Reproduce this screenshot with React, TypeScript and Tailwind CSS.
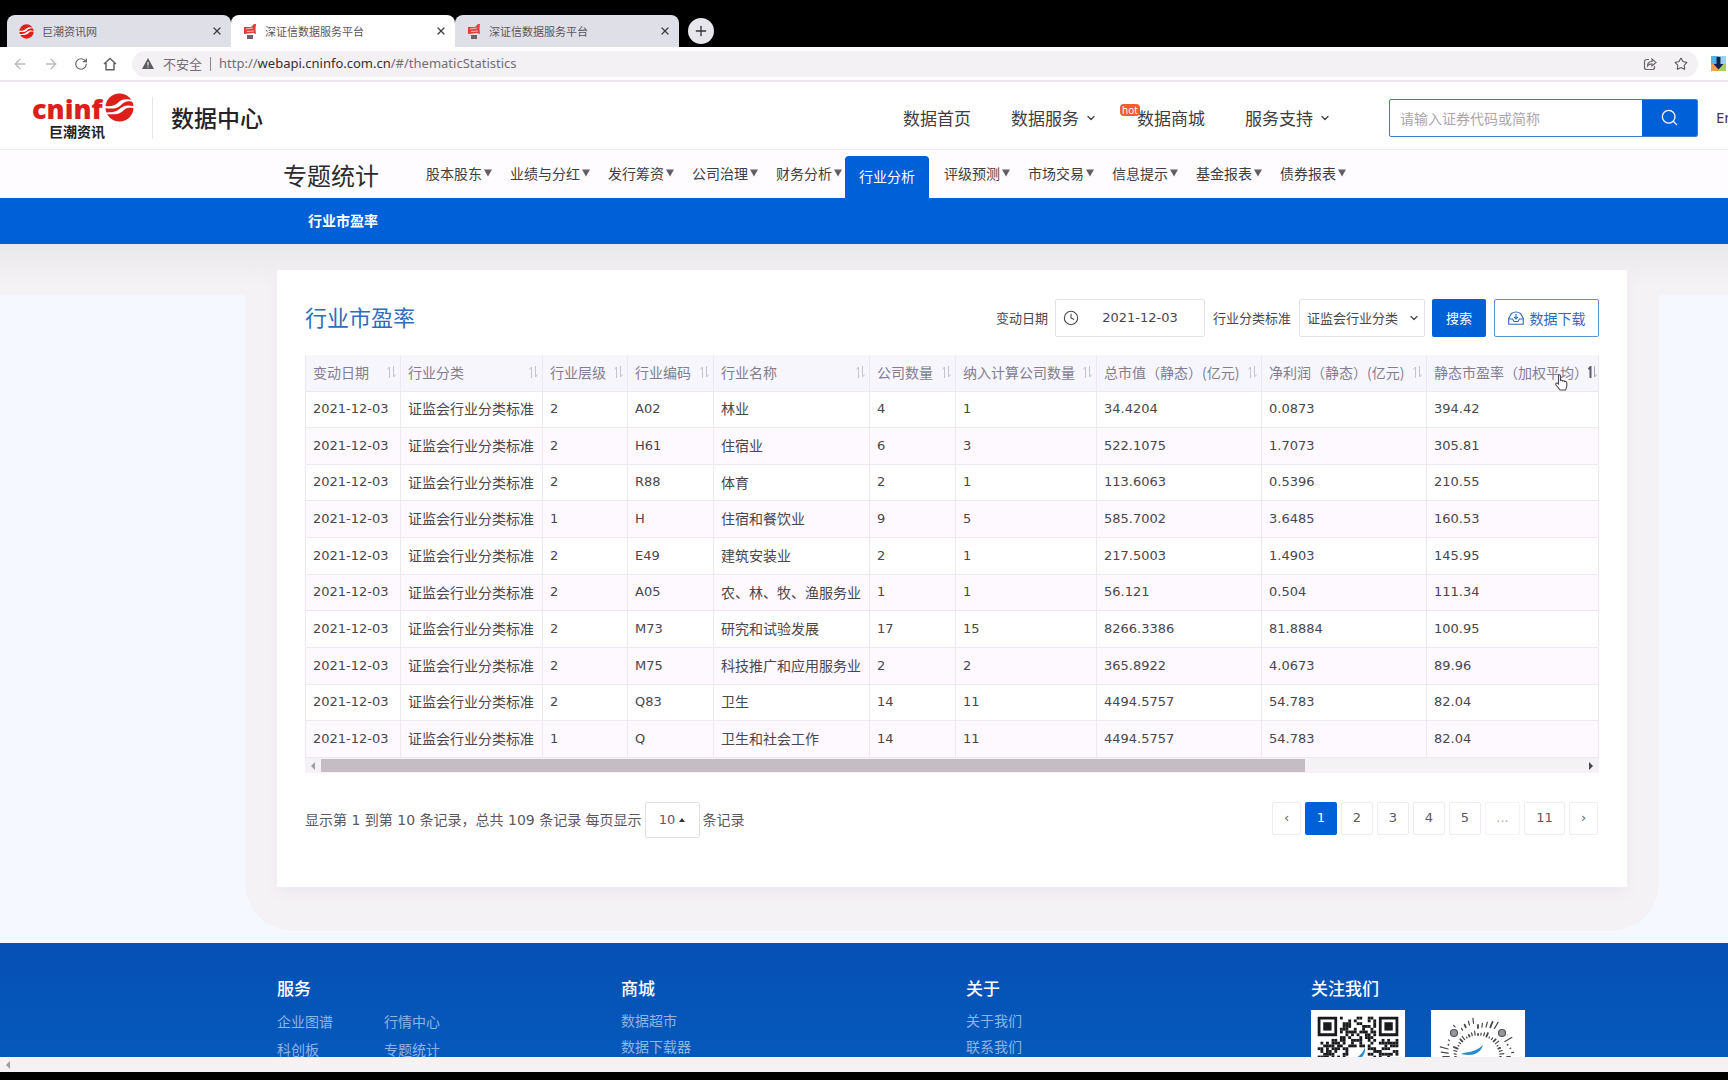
import React from 'react';
import { ChevronDown, Clock, Search, X, Plus, ArrowLeft, ArrowRight, RotateCw, Star } from 'lucide-react';

type Column = { label: string; width: string; sorted?: boolean };

const columns: Column[] = [
  { label: '变动日期', width: 'w-[95px]' },
  { label: '行业分类', width: 'w-[142px]' },
  { label: '行业层级', width: 'w-[85px]' },
  { label: '行业编码', width: 'w-[86px]' },
  { label: '行业名称', width: 'w-[156px]' },
  { label: '公司数量', width: 'w-[86px]' },
  { label: '纳入计算公司数量', width: 'w-[141px]' },
  { label: '总市值（静态）(亿元)', width: 'w-[165px]' },
  { label: '净利润（静态）(亿元)', width: 'w-[165px]' },
  { label: '静态市盈率（加权平均）', width: 'w-[172px]', sorted: true },
];

const rows: string[][] = [
  ['2', 'A02', '林业', '4', '1', '34.4204', '0.0873', '394.42'],
  ['2', 'H61', '住宿业', '6', '3', '522.1075', '1.7073', '305.81'],
  ['2', 'R88', '体育', '2', '1', '113.6063', '0.5396', '210.55'],
  ['1', 'H', '住宿和餐饮业', '9', '5', '585.7002', '3.6485', '160.53'],
  ['2', 'E49', '建筑安装业', '2', '1', '217.5003', '1.4903', '145.95'],
  ['2', 'A05', '农、林、牧、渔服务业', '1', '1', '56.121', '0.504', '111.34'],
  ['2', 'M73', '研究和试验发展', '17', '15', '8266.3386', '81.8884', '100.95'],
  ['2', 'M75', '科技推广和应用服务业', '2', '2', '365.8922', '4.0673', '89.96'],
  ['2', 'Q83', '卫生', '14', '11', '4494.5757', '54.783', '82.04'],
  ['1', 'Q', '卫生和社会工作', '14', '11', '4494.5757', '54.783', '82.04'],
];

function Swirl({ className }: { className: string }) {
  return (
    <svg viewBox="0 0 28 28" className={className} aria-hidden="true">
      <circle cx="14" cy="14" r="13.5" fill="#dd1f1c" />
      <path d="M0 12.500 C5 13 9 13 13 9 C16 6 20 5 27 7 L27.500 8.500 C21 7 18 9 15 12 C11 15.500 6 15.500 0 14.500Z" fill="#fff" />
      <path d="M0 19 C6 18.500 10 19 14 15.500 C18 12 21 11 28 13 L28 14.500 C22 13.500 20 14.500 17 17.500 C12 21.500 7 20.500 1 20.500Z" fill="#fff" />
    </svg>
  );
}

function Megaphone() {
  return (
    <svg viewBox="0 0 14 17" className="h-[17px] w-[14px]" aria-hidden="true">
      <path d="M1 4 L8 4 L11 1 L13 1 L12.500 6 L13 11 L10 10 L1 11 Z" fill="#e0403c" />
      <path d="M3 6 L10 5 M4 8.500 L11 8" stroke="#f6b9b7" strokeWidth="1" />
      <rect x="4" y="12" width="6" height="4" fill="#6c6468" />
    </svg>
  );
}

const tabs = [
  { title: '巨潮资讯网', active: false },
  { title: '深证信数据服务平台', active: true },
  { title: '深证信数据服务平台', active: false },
];

function BrowserChrome() {
  return (
    <div className="shrink-0">
      <div className="flex h-[47px] items-end bg-black pl-[7px]">
        {tabs.map((t, i) => (
          <div
            key={i}
            className={
              t.active
                ? 'flex h-8 w-[224px] items-center rounded-t-lg bg-white pr-2 pl-3 text-[#5a555b]'
                : 'flex h-8 w-[224px] items-center rounded-t-lg bg-[#dfe0e7] pr-2 pl-3 text-[#5a555b]'
            }
          >
            {i === 0 ? <Swirl className="h-[15px] w-[15px]" /> : <Megaphone />}
            <span className="ml-2 flex-1 text-[11px]">{t.title}</span>
            <button aria-label="关闭标签页" className="text-[#3f3d42]">
              <X size={12} strokeWidth={2.5} />
            </button>
          </div>
        ))}
        <button aria-label="新标签页" className="mb-[3px] ml-[9px] flex h-[26px] w-[26px] items-center justify-center rounded-full bg-[#e6e6ec] text-[#333]">
          <Plus size={16} strokeWidth={2} />
        </button>
      </div>
      <div className="flex h-[35px] items-center border-b-2 border-[#ebe4ec] bg-white">
        <div className="flex w-[132px] items-center gap-[15px] pl-3">
          <button aria-label="后退" className="text-[#bdb9be]"><ArrowLeft size={16} /></button>
          <button aria-label="前进" className="text-[#bdb9be]"><ArrowRight size={16} /></button>
          <button aria-label="刷新" className="text-[#626065]"><RotateCw size={14} strokeWidth={2} /></button>
          <button aria-label="主页" className="text-[#626065]">
            <svg viewBox="0 0 14 14" className="h-[14px] w-[14px]" fill="none" stroke="currentColor" strokeWidth="1.500">
              <path d="M1 7 L7 1.500 L13 7 M3 6 V12.700 H11 V6" />
            </svg>
          </button>
        </div>
        <div className="flex h-[26px] flex-1 items-center rounded-full bg-[#f4f1f5] pr-2.5 pl-[10px]">
          <svg viewBox="0 0 12 11" className="h-[11px] w-[12px]" aria-hidden="true">
            <path d="M6 0 L12 11 H0Z" fill="#5f5c61" />
            <path d="M6 4v3.500M6 8.500v1" stroke="#f4f1f5" strokeWidth="1.200" />
          </svg>
          <span className="ml-[9px] text-[13px] text-[#736e75]">不安全</span>
          <span className="mx-2 h-3.5 w-px bg-[#8d888f]" />
          <span className="flex-1 font-['Noto_Sans'] text-[13px] text-[#736e75]">
            http://<span className="text-[#333036]">webapi.cninfo.com.cn</span>/#/thematicStatistics
          </span>
          <button aria-label="分享" className="mr-[17px] text-[#6d686f]">
            <svg viewBox="0 0 14 14" className="h-[14px] w-[14px]" fill="none" stroke="currentColor" strokeWidth="1.200">
              <path d="M6 2.500H3.500A2 2 0 0 0 1.500 4.500V10.500A2 2 0 0 0 3.500 12.500H9.500A2 2 0 0 0 11.500 10.500V9" />
              <path d="M4.500 9C4.500 6 6 4.500 9 4.500V2L13 5.500L9 9V6.800C7 6.800 5.500 7.500 4.500 9Z" />
            </svg>
          </button>
          <button aria-label="收藏" className="text-[#58545a]"><Star size={14} strokeWidth={1.8} /></button>
        </div>
        <div className="flex w-[30px] justify-end pr-0.5">
          <svg viewBox="0 0 15 15" className="h-[15px] w-[15px]" aria-hidden="true">
            <rect width="8" height="8" fill="#57b4e6" />
            <rect x="8" width="7" height="8" fill="#9bd3ee" />
            <rect y="8" width="8" height="7" fill="#f2a04b" />
            <rect x="8" y="8" width="7" height="7" fill="#a9cf5b" />
            <path d="M5.500 1h4v7h3l-5 5.500l-5-5.500h3z" fill="#14234d" />
          </svg>
        </div>
      </div>
    </div>
  );
}

function SiteHeader() {
  return (
    <header className="flex h-[67px] items-center justify-between bg-white pt-1 pl-8">
      <div className="flex items-center">
        <a href="#home" aria-label="巨潮资讯" className="relative flex w-[102px] flex-col">
          <span className="font-['Open_Sans'] text-[27px] leading-[26px] font-extrabold text-[#dd1f1c]">cninf</span>
          <span className="pl-[17px] text-sm leading-[18px] font-bold text-[#222]">巨潮资讯</span>
          <Swirl className="absolute -top-[3px] right-0 h-[29px] w-[29px]" />
        </a>
        <span className="mx-[18px] h-[42px] w-px bg-[#e7e5ea]" />
        <h1 className="pb-0.5 text-[23px] leading-8 font-medium text-[#252328]">数据中心</h1>
      </div>
      <div className="flex items-center">
        <nav className="flex items-center text-[17px] text-[#3f3c42]">
          <a href="#index">数据首页</a>
          <a href="#service" className="ml-10 flex items-center gap-1.5">数据服务<ChevronDown size={12} strokeWidth={2.5} /></a>
          <a href="#mall" className="relative ml-10">
            数据商城
            <span className="absolute -top-px -left-[17px] rounded-sm bg-[#f4602c] px-[2px] font-['Open_Sans'] text-[10px] leading-3 text-white">hot</span>
          </a>
          <a href="#support" className="ml-10 flex items-center gap-1.5">服务支持<ChevronDown size={12} strokeWidth={2.5} /></a>
        </nav>
        <form className="ml-[58px] flex h-[38px] w-[309px] overflow-hidden rounded-xs border border-[#3c7cc0]">
          <input
            aria-label="证券代码或简称"
            placeholder="请输入证券代码或简称"
            className="min-w-0 flex-1 px-2.5 text-sm outline-none placeholder:text-[#aba6ad]"
          />
          <button type="button" aria-label="搜索" className="flex w-[55px] items-center justify-center bg-[#0060d8] text-white">
            <Search size={19} strokeWidth={1.6} />
          </button>
        </form>
        <a href="#en" className="ml-[18px] w-[12px] overflow-hidden font-['Noto_Sans'] text-[15px] text-[#3f3c42]">En</a>
      </div>
    </header>
  );
}

const topics = ['股本股东', '业绩与分红', '发行筹资', '公司治理', '财务分析', '行业分析', '评级预测', '市场交易', '信息提示', '基金报表', '债券报表'];

function TopicNav() {
  return (
    <div>
      <div className="flex h-[49px] items-end border-t border-[#f3ecf4] bg-[#fefcff] pl-[283px]">
        <h2 className="mr-8 flex h-[42px] items-center pb-1 text-2xl text-[#2d2a30]">专题统计</h2>
        <nav className="flex text-sm text-[#3f3c42]">
          {topics.map((t) =>
            t === '行业分析' ? (
              <a key={t} href="#current" className="flex h-[42px] items-center rounded-t-sm bg-[#0060d8] px-[14px] pb-0.5 text-white">
                {t}
              </a>
            ) : (
              <a key={t} href={'#' + t} className="flex h-[42px] items-center gap-0.5 pr-[3px] pb-2 pl-[15px]">
                {t}
                <svg viewBox="0 0 8 8" className="h-2 w-2" aria-hidden="true">
                  <path d="M0 0.500H8L4 7.500Z" fill="#625e64" />
                </svg>
              </a>
            ),
          )}
        </nav>
      </div>
      <div className="flex h-[46px] items-center bg-[#0060d8] pb-0.5 pl-[308px]">
        <a href="#pe" className="text-sm font-bold text-white">行业市盈率</a>
      </div>
    </div>
  );
}

function SortMark({ sorted }: { sorted?: boolean }) {
  return (
    <svg
      viewBox="0 0 9 12"
      className={sorted ? 'h-3 w-[9px] shrink-0 text-[#a9a5b6]' : 'h-3 w-[9px] shrink-0 text-[#c6c2d0]'}
      fill="none"
      stroke="currentColor"
      strokeWidth="1"
      aria-hidden="true"
    >
      <path d="M2.500 12V1L0.500 3.500" stroke={sorted ? '#5f5b6c' : 'currentColor'} strokeWidth={sorted ? 2 : 1} />
      <path d="M6.500 0V11L8.500 8.500" />
    </svg>
  );
}

function Filters() {
  return (
    <form className="flex items-center text-[13px] text-[#4a464d]">
      <label htmlFor="date">变动日期</label>
      <div className="ml-[7px] flex h-[38px] w-[150px] items-center rounded-xs border border-[#e6e0e8] pl-[7px]">
        <Clock size={16} strokeWidth={1.6} />
        <input
          id="date"
          defaultValue="2021-12-03"
          className="ml-1.5 w-[110px] text-center font-['DejaVu_Sans'] text-[13px] outline-none"
        />
      </div>
      <label htmlFor="standard" className="ml-2">行业分类标准</label>
      <div className="relative ml-2">
        <select id="standard" className="h-[38px] w-[126px] appearance-none rounded-xs border border-[#e6e0e8] bg-white pl-[7px] outline-none">
          <option>证监会行业分类</option>
        </select>
        <ChevronDown size={12} strokeWidth={2.5} className="pointer-events-none absolute top-[13px] right-[5px]" />
      </div>
      <button type="button" className="ml-[7px] h-[38px] w-[54px] rounded-xs bg-[#0060d8] text-white">搜索</button>
      <button type="button" className="ml-2 flex h-[38px] w-[105px] items-center justify-center gap-1.5 rounded-xs border border-[#5c92cf] text-sm text-[#2f6cbd]">
        <svg viewBox="0 0 16 14" className="h-[14px] w-4" fill="none" stroke="currentColor" strokeWidth="1.100" aria-hidden="true">
          <path d="M0.700 7.500 L3.500 2.500 Q8 -0.500 12.500 2.500 L15.300 7.500 V13.300 H0.700Z M0.700 8 H4.500 L6 10.500 H10 L11.500 8 H15.300" />
          <path d="M8 3V7.500M6 5.800L8 8L10 5.800" />
        </svg>
        数据下载
      </button>
    </form>
  );
}

function DataTable() {
  return (
    <div className="relative overflow-hidden">
      <table className="h-[403px] w-full table-fixed border-collapse text-sm text-[#4a464d]">
        <thead>
          <tr className="h-9 bg-[#f7f6fd]">
            {columns.map((c) => (
              <th key={c.label} className={c.width + ' border border-t-0 border-[#efe8f4] p-0 pb-0.5 pl-[7px] text-left font-normal text-[#827d90]'}>
                <div className="flex items-center justify-between overflow-hidden pr-[8px] whitespace-nowrap last:pr-1">
                  <span>{c.label}</span>
                  <SortMark sorted={c.sorted} />
                </div>
              </th>
            ))}
          </tr>
        </thead>
        <tbody>
          {rows.map((r, i) => (
            <tr key={i} className="even:bg-[#fef9ff]">
              <td className="border border-[#efe8f1] p-0 pl-[7px] align-middle font-['DejaVu_Sans'] text-[13px]">2021-12-03</td>
              <td className="border border-[#efe8f1] p-0 pb-0.5 pl-[7px] align-middle whitespace-nowrap">证监会行业分类标准</td>
              {r.map((v, j) => (
                <td
                  key={j}
                  className={
                    j === 2
                      ? 'border border-[#efe8f1] p-0 pb-0.5 pl-[7px] align-middle whitespace-nowrap'
                      : "border border-[#efe8f1] p-0 pl-[7px] align-middle font-['DejaVu_Sans'] text-[13px]"
                  }
                >
                  {v}
                </td>
              ))}
            </tr>
          ))}
        </tbody>
      </table>
      <div className="flex h-[15px] items-center bg-[#f5f2f6] px-[6px]">
        <svg viewBox="0 0 4 8" className="h-2 w-1"><path d="M4 0V8L0 4Z" fill="#a29da4" /></svg>
        <div className="mx-1.5 flex-1">
          <div className="h-[13px] w-[78%] bg-[#c4bdc3]" />
        </div>
        <svg viewBox="0 0 4 8" className="h-2 w-1"><path d="M0 0V8L4 4Z" fill="#4a464d" /></svg>
      </div>
      <svg viewBox="0 0 13 17" className="absolute top-[19px] right-[31px] h-[17px] w-[13px]" aria-hidden="true">
        <path
          d="M3.500 9.500V1.800Q3.500 0.700 4.500 0.700Q5.500 0.700 5.500 1.800V6.500Q7 5.800 7.500 7Q9 6.300 9.500 7.500Q11.500 7 11.800 9V12Q11.500 14 10.500 16H5Q3.500 14 1 11Q0.300 9.500 1.500 9Q2.500 8.800 3.500 10Z"
          fill="#fff"
          stroke="#4c484f"
          strokeWidth="1.100"
        />
      </svg>
    </div>
  );
}

const pages = ['1', '2', '3', '4', '5', '...', '11'];

function Pagination() {
  return (
    <div className="mt-[29px] flex items-start justify-between text-sm text-[#5d585f]">
      <div className="flex items-center font-['DejaVu_Sans','Noto_Sans_CJK_SC',sans-serif] whitespace-pre">
        <span>显示第 1 到第 10 条记录，总共 109 条记录 每页显示</span>
        <button className="mx-[3px] flex h-9 w-[55px] items-center justify-center gap-1 rounded-xs border border-[#e6dfe8] text-[13px]">
          10
          <svg viewBox="0 0 6 4" className="h-1 w-1.5"><path d="M0 4H6L3 0Z" fill="#333" /></svg>
        </button>
        <span>条记录</span>
      </div>
      <nav aria-label="分页" className="flex gap-1 pr-px font-['DejaVu_Sans'] text-[13px]">
        <button aria-label="上一页" className="h-[33px] w-[29px] rounded-xs border border-[#f0eaf1]">‹</button>
        {pages.map((p) => (
          <button
            key={p}
            className={
              p === '1'
                ? 'h-[33px] w-8 rounded-xs bg-[#0060d8] text-white'
                : p === '11'
                  ? 'h-[33px] w-[41px] rounded-xs border border-[#f0eaf1]'
                  : p === '...'
                    ? 'h-[33px] w-[35px] rounded-xs border border-[#f6f2f7] text-[#b0abb2]'
                    : 'h-[33px] w-8 rounded-xs border border-[#f0eaf1]'
            }
          >
            {p}
          </button>
        ))}
        <button aria-label="下一页" className="h-[33px] w-[29px] rounded-xs border border-[#f0eaf1]">›</button>
      </nav>
    </div>
  );
}

function QrCode() {
  const n = 29;
  const cells: React.ReactNode[] = [];
  let seed = 20211;
  for (let y = 0; y < n; y++) {
    for (let x = 0; x < n; x++) {
      seed = (seed * 1103515245 + 12345) % 2147483648;
      const finder = (x < 8 && y < 8) || (x > n - 9 && y < 8) || (x < 8 && y > n - 9);
      const logo = x > 10 && x < 18 && y > 10 && y < 18;
      if (!finder && !logo && seed / 2147483648 > 0.45) cells.push(<rect key={y * n + x} x={x} y={y} width="1.020" height="1.020" />);
    }
  }
  return (
    <svg viewBox="-2.400 -2.400 33.800 33.800" className="h-[94px] w-[94px] bg-white" fill="#1a1a1e" role="img" aria-label="公众号二维码">
      {cells}
      {[[0, 0], [22, 0], [0, 22]].map(([x, y]) => (
        <g key={x + '-' + y}>
          <path fillRule="evenodd" d={`M${x} ${y}h7v7h-7z M${x + 1} ${y + 1}v5h5v-5z`} />
          <rect x={x + 2} y={y + 2} width="3" height="3" />
        </g>
      ))}
      <path d="M11.500 17C13 14.500 15.500 15 17 11C17.500 14 15 16 11.500 17Z" fill="#2a8ccb" />
    </svg>
  );
}

function RadialCode() {
  const rays: React.ReactNode[] = [];
  for (let i = 0; i < 48; i++) {
    const a = (i / 48) * Math.PI * 2;
    const cut = 29 + ((i * 7) % 6);
    const end = 32 + ((i * 11) % 9);
    const at = (r: number) => `${47 + Math.cos(a) * r} ${47 + Math.sin(a) * r}`;
    rays.push(
      <path
        key={i}
        d={`M${at(22)}L${at(23 + ((i * 5) % 4))}M${at(cut)}L${at(end)}`}
        stroke="#4a474d"
        strokeWidth={i % 3 === 0 ? 1.8 : 1.2}
        strokeLinecap="round"
      />,
    );
  }
  return (
    <svg viewBox="0 0 94 94" className="h-[94px] w-[94px] bg-white" role="img" aria-label="小程序码">
      {rays}
      {[[23, 23], [71, 23], [23, 71]].map(([x, y]) => (
        <g key={x + '-' + y}>
          <circle cx={x} cy={y} r="6" fill="#fff" />
          <circle cx={x} cy={y} r="3.500" fill="#9a969d" stroke="#555" strokeWidth="1.200" />
        </g>
      ))}
      <path d="M30 44C37 41 44 43 52 35C50 42 44 47 30 44Z" fill="#2a8ccb" />
    </svg>
  );
}

function LinkColumn({ title, links }: { title: string; links: string[] }) {
  return (
    <div>
      <h3 className="text-[17px] leading-6 font-medium text-white">{title}</h3>
      <ul className="mt-[7px] text-sm leading-[26px] text-[#8fb4e4]">
        {links.map((l) => (
          <li key={l}><a href={'#' + l}>{l}</a></li>
        ))}
      </ul>
    </div>
  );
}

function SiteFooter() {
  return (
    <footer className="grid min-h-[300px] grid-cols-[344px_345px_345px_1fr] bg-linear-to-b from-[#0650b6] to-[#0668c0] pt-[33px] pl-[277px]">
      <div>
        <h3 className="text-[17px] leading-6 font-medium text-white">服务</h3>
        <ul className="mt-[7px] grid w-[214px] grid-cols-2 text-sm leading-7 text-[#8fb4e4]">
          {['企业图谱', '行情中心', '科创板', '专题统计'].map((l) => (
            <li key={l}><a href={'#' + l}>{l}</a></li>
          ))}
        </ul>
      </div>
      <LinkColumn title="商城" links={['数据超市', '数据下载器']} />
      <LinkColumn title="关于" links={['关于我们', '联系我们']} />
      <div>
        <h3 className="text-[17px] leading-6 font-medium text-white">关注我们</h3>
        <div className="mt-[10px] flex gap-[26px]">
          <QrCode />
          <RadialCode />
        </div>
      </div>
    </footer>
  );
}

export default function App() {
  return (
    <div className="flex h-screen flex-col overflow-hidden bg-black font-['Noto_Sans_CJK_SC',sans-serif]">
      <BrowserChrome />
      <div className="min-h-0 flex-1 overflow-hidden bg-[#f6f8ff]">
        <SiteHeader />
        <TopicNav />
        <main className="bg-[linear-gradient(to_bottom,#e9e8ea,#f5f2f5_42px,#f5f2f5_50px,#f6f8ff_52px)] pr-[69px] pb-3 pl-[245px]">
          <div className="rounded-b-[48px] bg-[linear-gradient(to_bottom,#e9e8ea,#f5f2f5_42px,#f5f2f5)] px-8 pt-[26px] pb-11">
            <section className="bg-white px-7 pt-[29px] pb-[49px] shadow-[0_6px_12px_#ece8f0]">
              <div className="mb-[18px] flex items-center justify-between">
                <h2 className="pb-1 text-[22px] leading-8 text-[#2f6cbd]">行业市盈率</h2>
                <Filters />
              </div>
              <DataTable />
              <Pagination />
            </section>
          </div>
        </main>
        <SiteFooter />
      </div>
      <div className="flex h-[15px] shrink-0 items-center bg-[#f5f2f6] pl-[6px]">
        <svg viewBox="0 0 4 8" className="h-2 w-1"><path d="M4 0V8L0 4Z" fill="#a29da4" /></svg>
      </div>
      <div className="h-2 shrink-0 bg-black" />
    </div>
  );
}
